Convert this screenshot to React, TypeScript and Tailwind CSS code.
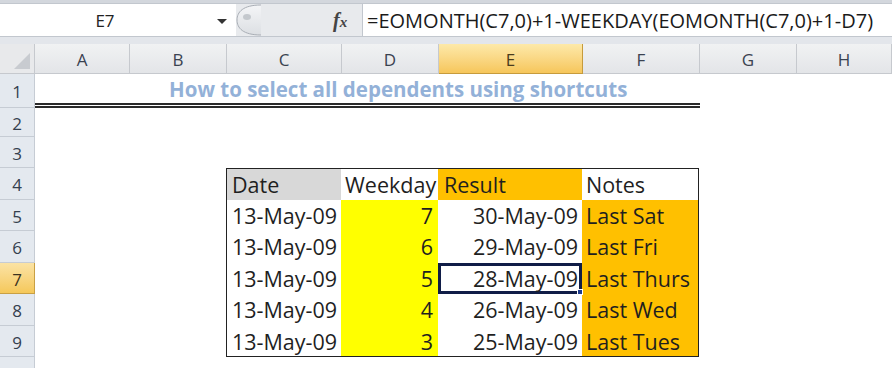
import React from "react";

const rows = [
  { n: 5, d: "7", r: "30-May-09", t: "Last Sat" },
  { n: 6, d: "6", r: "29-May-09", t: "Last Fri" },
  { n: 7, d: "5", r: "28-May-09", t: "Last Thurs" },
  { n: 8, d: "4", r: "26-May-09", t: "Last Wed" },
  { n: 9, d: "3", r: "25-May-09", t: "Last Tues" },
];

const rowH: Record<number, string> = {
  5: "h-[31px]",
  6: "h-[32px]",
  7: "h-[31px]",
  8: "h-[32px]",
  9: "h-[31px]",
};

function RowHead({ n, h, active }: { n: number | string; h: string; active?: boolean }) {
  return (
    <div
      className={`w-[35px] shrink-0 ${h} flex items-center justify-center pt-[3px] text-[17px] border-b border-r overflow-hidden ${
        active
          ? "bg-gradient-to-b from-[#fbe3a4] to-[#f5c859] border-[#c9a044] text-[#3b3320]"
          : "bg-[#e4e9ef] border-[#c6ccd4] text-[#34404e]"
      }`}
    >
      {n}
    </div>
  );
}

export default function App() {
  const cols = [
    { k: "A", w: "w-[95px]" },
    { k: "B", w: "w-[97px]" },
    { k: "C", w: "w-[115px]" },
    { k: "D", w: "w-[97px]" },
    { k: "E", w: "w-[144px]" },
    { k: "F", w: "w-[117px]" },
    { k: "G", w: "w-[97px]" },
    { k: "H", w: "w-[95px]" },
  ];
  return (
    <div className="w-[892px] h-[368px] overflow-hidden bg-white font-['Open_Sans',sans-serif] text-[#1f1f1f]">
      {/* formula bar */}
      <div className="h-[44px] bg-[#dfe3e9] flex flex-col">
        <div className="h-[3px] bg-[#d3d7dd]" />
        <div className="h-[34px] flex border-y border-[#c2c7ce]">
          <div className="w-[236px] bg-white flex items-center">
            <span className="w-[210px] text-center text-[17px] text-[#222] pt-[1px]">E7</span>
            <span className="ml-[7px] w-0 h-0 border-l-[5px] border-r-[5px] border-t-[5px] border-l-transparent border-r-transparent border-t-[#333] mt-[2px]" />
          </div>
          <div className="w-[126px] bg-[#e8eaed] flex items-center">
            <svg width="26" height="32" viewBox="0 0 26 32" className="ml-[-1px]">
              <defs>
                <linearGradient id="g1" x1="0" y1="0" x2="0" y2="1">
                  <stop offset="0" stopColor="#f4f5f7" />
                  <stop offset="1" stopColor="#dcdfe3" />
                </linearGradient>
              </defs>
              <path d="M26 1 C8 1 2 8 2 16 C2 24 8 31 26 31 Z" fill="url(#g1)" />
              <path d="M26 1 C8 1 2 8 2 16 C2 24 8 31 26 31" fill="none" stroke="#a9aeb5" strokeWidth="1" />
              <ellipse cx="12" cy="13" rx="4" ry="3" fill="#c4c8cd" />
            </svg>
            <span className="ml-[72px] font-['Liberation_Serif',serif] italic font-bold text-[#444] leading-none">
              <span className="text-[20px]">f</span>
              <span className="text-[15px]">x</span>
            </span>
          </div>
          <div className="flex-1 bg-white border-l border-[#c2c7ce] flex items-center pl-[4px] text-[20px] text-[#1a1a1a] whitespace-nowrap pt-[1px]">
            =EOMONTH(C7,0)+1-WEEKDAY(EOMONTH(C7,0)+1-D7)
          </div>
        </div>
        <div className="flex-1 bg-[#e3e6eb]" />
      </div>

      {/* column headers */}
      <div className="flex h-[30px]">
        <div className="w-[35px] shrink-0 bg-[#e8e9eb] border-r border-b border-[#c6c9ce] relative">
          <svg width="16" height="16" className="absolute right-[4px] bottom-[4px]">
            <path d="M16 0 L16 16 L0 16 Z" fill="#c8cbd0" />
          </svg>
        </div>
        {cols.map((c) => (
          <div
            key={c.k}
            className={`${c.w} shrink-0 flex items-center justify-center text-[17px] pt-[2px] border-r border-b ${
              c.k === "E"
                ? "bg-gradient-to-b from-[#fde9a9] to-[#f6c65a] border-[#c69b3c] text-[#4a3b1c]"
                : "bg-gradient-to-b from-[#f1f2f3] to-[#e3e5e8] border-[#c6c9ce] text-[#3a4250]"
            }`}
          >
            {c.k}
          </div>
        ))}
      </div>

      {/* row 1 */}
      <div className="flex">
        <RowHead n={1} h="h-[34px]" />
        <div className="w-[665px] h-[34px] border-b-[5px] border-double border-[#2a2a2a] flex items-center pl-[134px] pt-[1px] text-[20.5px] font-bold text-[#93b1d8] whitespace-nowrap">
          How to select all dependents using shortcuts
        </div>
      </div>
      {/* row 2 */}
      <div className="flex">
        <RowHead n={2} h="h-[29px]" />
      </div>
      {/* row 3 */}
      <div className="flex">
        <RowHead n={3} h="h-[31px]" />
      </div>
      {/* row 4 */}
      <div className="flex text-[21.5px] leading-[30px]">
        <RowHead n={4} h="h-[32px]" />
        <div className="w-[95px]" />
        <div className="w-[97px]" />
        <div className="w-[115px] h-[32px] bg-[#d8d8d8] border-l border-t border-[#222] pl-[5px] pt-[1px] -ml-px">
          Date
        </div>
        <div className="w-[97px] h-[32px] bg-white border-t border-[#222] pl-[4px] pt-[1px] whitespace-nowrap">Weekday</div>
        <div className="w-[144px] h-[32px] bg-[#ffc000] border-t border-[#222] pl-[6px] pt-[1px]">Result</div>
        <div className="w-[117px] h-[32px] bg-white border-t border-r border-[#222] pl-[4px] pt-[1px]">Notes</div>
      </div>
      {rows.map((r) => {
        const last = r.n === 9;
        const active = r.n === 7;
        return (
          <div key={r.n} className="flex text-[21.5px] leading-[30px]">
            <RowHead n={r.n} h={rowH[r.n]} active={active} />
            <div className="w-[95px]" />
            <div className="w-[97px]" />
            <div
              className={`w-[115px] ${rowH[r.n]} bg-white border-l border-[#222] pl-[5px] pt-[1px] -ml-px ${
                last ? "border-b" : ""
              }`}
            >
              13-May-09
            </div>
            <div
              className={`w-[97px] ${rowH[r.n]} bg-[#ffff00] text-right pr-[5px] pt-[1px] ${
                last ? "border-b border-[#222]" : ""
              }`}
            >
              {r.d}
            </div>
            {active ? (
              <div className={`w-[144px] ${rowH[r.n]} relative bg-white border-[3px] border-[#101d47] text-right pr-[1px] leading-[25px] whitespace-nowrap`}>
                {r.r}
                <span className="absolute -right-[4px] -bottom-[4px] w-[6px] h-[6px] bg-[#1c3a8c] border border-white" />
              </div>
            ) : (
              <div
                className={`w-[144px] ${rowH[r.n]} bg-white text-right pr-[4px] pt-[1px] ${
                  last ? "border-b border-[#222]" : ""
                }`}
              >
                {r.r}
              </div>
            )}
            <div
              className={`w-[117px] ${rowH[r.n]} bg-[#ffc000] border-r border-[#222] pl-[4px] pt-[1px] whitespace-nowrap ${
                last ? "border-b" : ""
              }`}
            >
              {r.t}
            </div>
          </div>
        );
      })}
      <div className="flex">
        <RowHead n={10} h="h-[31px]" />
      </div>
    </div>
  );
}
